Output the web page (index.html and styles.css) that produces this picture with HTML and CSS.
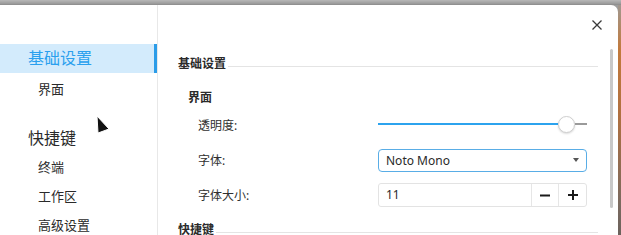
FILE: index.html
```html
<!DOCTYPE html>
<html lang="zh">
<head>
<meta charset="utf-8">
<title>设置</title>
<link rel="stylesheet" href="styles.css">
</head>
<body>
<div class="screen">
  <div class="topbar"></div>
  <div class="main">
    <div class="window">
      <nav class="sidebar">
        <div class="nav-group nav-active">基础设置</div>
        <div class="nav-item">界面</div>
        <div class="nav-group nav-group-gap">快捷键</div>
        <div class="nav-item">终端</div>
        <div class="nav-item">工作区</div>
        <div class="nav-item">高级设置</div>
      </nav>
      <section class="content">
        <div class="section-head"><span class="section-title">基础设置</span><span class="section-line"></span></div>
        <div class="sub-head">界面</div>
        <div class="rows">
          <div class="row">
            <span class="label">透明度:</span>
            <div class="control slider">
              <div class="track-fill"></div>
              <div class="knob"></div>
              <div class="track-rest"></div>
            </div>
          </div>
          <div class="row">
            <span class="label">字体:</span>
            <div class="control select">
              <span class="select-text">Noto Mono</span>
              <span class="caret"></span>
            </div>
          </div>
          <div class="row">
            <span class="label">字体大小:</span>
            <div class="control spin">
              <span class="spin-value">11</span>
              <span class="spin-btn">
                <svg width="12" height="12" viewBox="0 0 12 12"><path d="M1 6.5h10" stroke="#1a1a1a" stroke-width="2"/></svg>
              </span>
              <span class="spin-btn">
                <svg width="12" height="12" viewBox="0 0 12 12"><path d="M1 6h10M6 1v10" stroke="#1a1a1a" stroke-width="2"/></svg>
              </span>
            </div>
          </div>
        </div>
        <div class="section-head section-head-2"><span class="section-title">快捷键</span><span class="section-line"></span></div>
        <button class="close" aria-label="关闭">
          <svg width="12" height="12" viewBox="0 0 12 12"><path d="M1.5 1.5l9 9M10.5 1.5l-9 9" stroke="#3a3a3a" stroke-width="1.3"/></svg>
        </button>
        <div class="scrollbar"></div>
      </section>
    </div>
    <div class="desktop"></div>
  </div>
  <svg class="cursor" width="18" height="22" viewBox="0 0 18 22">
    <path d="M2 2 L14 15 L3 19 Z" fill="#111" stroke="#fff" stroke-width="1" stroke-linejoin="round"/>
  </svg>
</div>
</body>
</html>
```
FILE: styles.css
```css
html, body {
  margin: 0;
  padding: 0;
}
body {
  font-family: "Noto Sans", "Noto Sans CJK SC", sans-serif;
  color: #303030;
  background: #fff;
}
.screen {
  position: relative;
  width: 621px;
  height: 235px;
  overflow: hidden;
  display: flex;
  flex-direction: column;
  background: #9e9e9e;
}
.topbar {
  height: 5px;
  flex: none;
  background: linear-gradient(#b8b8b8, #989898 80%, #888);
}
.main {
  flex: 1;
  display: flex;
  min-height: 0;
}
.window {
  width: 618px;
  flex: none;
  display: flex;
  background: #fff;
  border-top-right-radius: 7px;
  overflow: hidden;
}
.desktop {
  flex: 1;
  background: linear-gradient(#a09890 0px, #c27a3c 45px, #b07040 110px, #7a6a60 200px, #6c625c);
}
.sidebar {
  width: 157px;
  flex: none;
  border-right: 1px solid #e8e8e8;
  padding-top: 39px;
  box-sizing: content-box;
}
.nav-group {
  height: 30px;
  line-height: 30px;
  padding-left: 28px;
  font-size: 16px;
  color: #2a2a2a;
}
.nav-active {
  background: #d3ebfc;
  color: #2aa0ee;
  box-shadow: inset -3px 0 0 #2b9ce8;
  height: 29px;
  line-height: 29px;
}
.nav-group-gap {
  margin-top: 19px;
}
.nav-item {
  height: 29px;
  line-height: 29px;
  padding-left: 38px;
  font-size: 13px;
  color: #2a2a2a;
}
.nav-active + .nav-item {
  margin-top: 2px;
}
.content {
  position: relative;
  flex: 1;
  padding: 50px 20px 0 20px;
}
.section-head {
  display: flex;
  align-items: center;
  height: 17px;
}
.section-title {
  font-size: 12px;
  font-weight: bold;
  line-height: 17px;
  color: #2a2a2a;
}
.section-line {
  flex: 1;
  height: 1px;
  background: #e4e4e4;
  margin-left: 2px;
  margin-top: 6px;
}
.sub-head {
  margin-top: 17px;
  padding-left: 10px;
  font-size: 12px;
  font-weight: bold;
  line-height: 17px;
  color: #2a2a2a;
}
.rows {
  margin-top: 7px;
  padding-left: 20px;
  padding-right: 11px;
  display: flex;
  flex-direction: column;
  gap: 11px;
}
.row {
  height: 24px;
  display: flex;
  align-items: center;
  justify-content: space-between;
}
.label {
  font-size: 12px;
  color: #303030;
}
.control {
  width: 209px;
  height: 24px;
  box-sizing: border-box;
  flex: none;
}
.slider {
  display: flex;
  align-items: center;
  margin-top: -2px;
}
.track-fill {
  width: 180px;
  height: 2px;
  background: #2ca3ee;
}
.knob {
  width: 17px;
  height: 17px;
  box-sizing: border-box;
  border-radius: 50%;
  border: 1px solid #cfcfcf;
  background: #fff;
  box-shadow: 0 1px 2px rgba(0,0,0,0.15);
  flex: none;
}
.track-rest {
  flex: 1;
  height: 2px;
  background: #9a9a9a;
}
.select {
  border: 1px solid #59ade6;
  border-radius: 4px;
  display: flex;
  align-items: center;
  justify-content: space-between;
  padding: 0 7px 0 7px;
  height: 23px;
}
.select-text {
  font-size: 12px;
  color: #2a2a2a;
}
.caret {
  width: 0;
  height: 0;
  border-left: 3.5px solid transparent;
  border-right: 3.5px solid transparent;
  border-top: 4px solid #555;
  margin-top: -1px;
}
.spin {
  border: 1px solid #e3e3e3;
  border-radius: 3px;
  display: flex;
  align-items: stretch;
  height: 24px;
}
.spin-value {
  flex: 1;
  font-size: 12px;
  line-height: 22px;
  padding-left: 7px;
  color: #2a2a2a;
}
.spin-btn {
  width: 26px;
  border-left: 1px solid #e6e6e6;
  display: flex;
  align-items: center;
  justify-content: center;
}
.spin-btn:last-child {
  width: 27px;
}
.section-head-2 {
  margin-top: 14px;
}
.close {
  position: absolute;
  top: 13px;
  right: 14px;
  width: 14px;
  height: 14px;
  padding: 0;
  border: 0;
  background: none;
  display: flex;
  align-items: center;
  justify-content: center;
}
.scrollbar {
  position: absolute;
  top: 44px;
  right: 5px;
  width: 3px;
  height: 159px;
  border-radius: 2px;
  background: #c8c8c8;
}
.cursor {
  position: absolute;
  left: 95px;
  top: 114px;
}
```
